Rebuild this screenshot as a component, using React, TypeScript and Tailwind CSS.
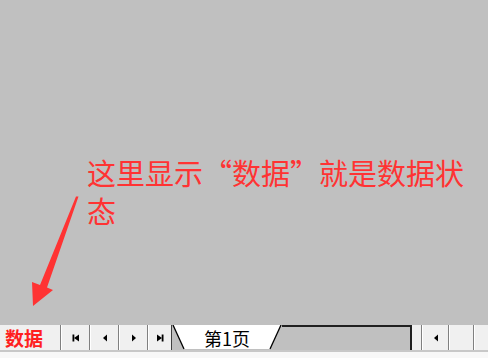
const cjk = "font-['Noto_Sans_CJK_SC','Noto_Sans',sans-serif]";

const Sep = () => (
  <div className="flex h-full w-[2px] shrink-0">
    <div className="w-px bg-[#808080]" />
    <div className="w-px bg-white" />
  </div>
);

type Kind = "first" | "prev" | "next" | "last" | "blank";

const NavIcon = ({ kind }: { kind: Kind }) => (
  <svg width="10" height="10" viewBox="0 0 10 10">
    {kind === "first" && (
      <>
        <rect x="1.5" y="1.5" width="1.8" height="7" fill="#000" />
        <path d="M8 1.5 L3 5 L8 8.5 Z" fill="#000" />
      </>
    )}
    {kind === "prev" && <path d="M7 1.5 L3 5 L7 8.5 Z" fill="#000" />}
    {kind === "next" && <path d="M3 1.5 L7 5 L3 8.5 Z" fill="#000" />}
    {kind === "last" && (
      <>
        <rect x="6.7" y="1.5" width="1.8" height="7" fill="#000" />
        <path d="M2 1.5 L7 5 L2 8.5 Z" fill="#000" />
      </>
    )}
  </svg>
);

const NavButton = ({ kind, w }: { kind: Kind; w: string }) => (
  <div className={`flex h-full items-center justify-center bg-[#f0f0f0] ${w}`}>
    <NavIcon kind={kind} />
  </div>
);

export default function App() {
  return (
    <div className={`flex h-[358px] w-[488px] flex-col overflow-hidden bg-[#c0c0c0] ${cjk}`}>
      <div className="relative flex-1">
        <div className="pl-[87px] pt-[153px]">
          <p className="w-[395px] text-[29px] leading-[38px] text-[#ff3333]">
            这里显示“数据”就是数据状态
          </p>
        </div>
        <svg className="absolute left-0 top-0" width="488" height="325" viewBox="0 0 488 325">
          <path d="M78.5 196.5 L76 196.5 L40 285 L32 282 L33 306 L53 290 L47 287.5 Z" fill="#ff3333" />
        </svg>
      </div>

      <div className="flex h-[25px] items-stretch bg-[#f0f0f0]">
        <div className="flex w-[60px] shrink-0 items-center pl-[5px]">
          <span className="text-[19px] font-bold leading-none text-[#ff2020]">数据</span>
        </div>
        <Sep />
        <NavButton kind="first" w="w-[27px]" />
        <Sep />
        <NavButton kind="prev" w="w-[27px]" />
        <Sep />
        <NavButton kind="next" w="w-[27px]" />
        <Sep />
        <NavButton kind="last" w="w-[22px]" />
        <div className="w-px bg-[#404040]" />
        <div className="flex h-full w-[240px] shrink-0 bg-[#c0c0c0]">
          <div className="relative flex w-[110px] shrink-0 items-center justify-center">
            <svg className="absolute inset-0" width="110" height="25" viewBox="0 0 110 25">
              <path d="M1 0 L12 24 L98 24 L109 0 Z" fill="#fff" />
              <path d="M1 0 L12 24" stroke="#000" strokeWidth="1.3" />
              <path d="M98 24 L109 0" stroke="#000" strokeWidth="1.3" />
            </svg>
            <span className="relative text-[18px] leading-none text-black">第1页</span>
          </div>
          <div className="flex-1 border-r-2 border-t-2 border-[#202020] bg-[#c0c0c0]" />
        </div>
        <div className="w-[9px] shrink-0 bg-[#f0f0f0]" />
        <Sep />
        <NavButton kind="prev" w="w-[25px]" />
        <Sep />
        <NavButton kind="blank" w="w-[23px]" />
        <Sep />
        <div className="flex-1 bg-[#f0f0f0]" />
      </div>
      <div className="h-[8px] border-t-2 border-[#c8c8c8] bg-[#f8f8f8]" />
    </div>
  );
}
